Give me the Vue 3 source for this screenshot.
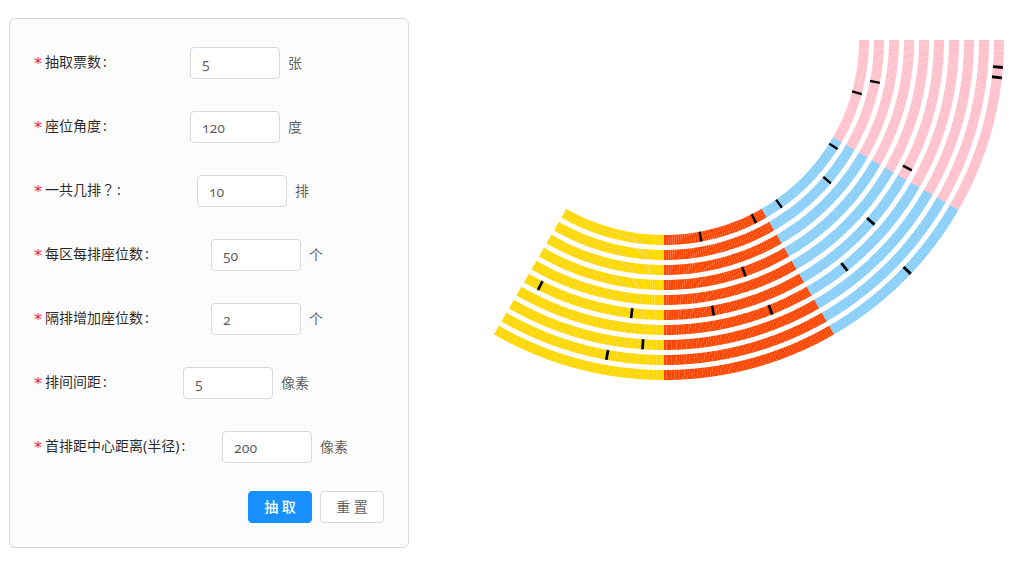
<script setup>
import { computed, reactive, ref } from 'vue'

const fields = [
  { key: 'tickets', label: '抽取票数', unit: '张' },
  { key: 'angle', label: '座位角度', unit: '度' },
  { key: 'rows', label: '一共几排', mark: '？', unit: '排' },
  { key: 'seats', label: '每区每排座位数', unit: '个' },
  { key: 'extra', label: '隔排增加座位数', unit: '个' },
  { key: 'gap', label: '排间间距', unit: '像素' },
  { key: 'radius', label: '首排距中心距离(半径)', unit: '像素' },
]
const defaults = { tickets: '5', angle: '120', rows: '10', seats: '50', extra: '2', gap: '5', radius: '200' }
const form = reactive({ ...defaults })

const zoneColors = ['pink', 'lightskyblue', 'orangered', 'gold']
const zoneAngle = 30
const seatDepth = 10

// Drawn seats, written as zone-row-seat
const initialDrawn = [
  '0-0-25', '0-1-19', '0-9-10', '0-9-14', '0-5-55',
  '1-0-3', '1-1-18', '1-0-41', '1-5-22', '1-6-44', '1-9-30',
  '2-0-5', '2-0-32', '2-3-20', '2-5-39', '2-6-17',
  '3-5-53', '3-5-13', '3-7-8', '3-8-22',
]
const drawn = ref(new Set(initialDrawn))

function point(radius, degrees) {
  const a = (degrees * Math.PI) / 180
  return `${(radius * Math.cos(a)).toFixed(4)} ${(radius * Math.sin(a)).toFixed(4)}`
}

function arc(radius, start, end) {
  return `M${point(radius, start)}A${radius} ${radius} 0 0 1 ${point(radius, end)}`
}

const seats = []
zoneColors.forEach((color, zone) => {
  for (let row = 0; row < 10; row++) {
    const count = 50 + row * 2
    const radius = 200 + row * 15
    const step = zoneAngle / count
    // A drawn seat overlaps its neighbours a little so that it stands out
    const edge = step * 0.05
    for (let i = 0; i < count; i++) {
      const start = zone * zoneAngle + i * step
      seats.push({
        id: `${zone}-${row}-${i}`,
        color,
        d: arc(radius, start, start + step),
        mark: arc(radius, start - edge, start + step + edge),
      })
    }
  }
})
const drawnSeats = computed(() => seats.filter((s) => drawn.value.has(s.id)))

function draw() {
  const pool = seats.filter((s) => !drawn.value.has(s.id))
  const next = new Set(drawn.value)
  for (let i = 0; i < Number(form.tickets) && pool.length; i++) {
    const [seat] = pool.splice(Math.floor(Math.random() * pool.length), 1)
    next.add(seat.id)
  }
  drawn.value = next
}

function reset() {
  Object.assign(form, defaults)
  drawn.value = new Set()
}
</script>

<template>
  <main class="page">
    <form class="card" @submit.prevent="draw">
      <div v-for="f in fields" :key="f.key" class="item">
        <label class="label" :for="f.key"><span class="star">*</span>{{ f.label }}<span v-if="f.mark" class="mark">{{ f.mark }}</span><span class="colon">:</span></label>
        <div class="control">
          <input :id="f.key" v-model="form[f.key]" class="input" type="text" />
          <span class="unit">{{ f.unit }}</span>
        </div>
      </div>
      <div class="actions">
        <button class="button primary" type="submit">抽 取</button>
        <button class="button" type="button" @click="reset">重 置</button>
      </div>
    </form>
    <svg class="seats" viewBox="-180 0 520 340" role="img" aria-label="座位">
      <g fill="none" :stroke-width="seatDepth">
        <path v-for="s in seats" :key="s.id" :d="s.d" :stroke="s.color" />
        <path v-for="s in drawnSeats" :key="s.id" :d="s.mark" stroke="black" />
      </g>
    </svg>
  </main>
</template>

<style>
body {
  background: #fff;
}
</style>

<style scoped>
.page {
  display: flex;
  align-items: flex-start;
  padding: 18px 9px;
  font-family: "Noto Sans", "Noto Sans CJK SC", sans-serif;
  font-size: 14px;
  color: rgba(0, 0, 0, 0.65);
}
.card {
  box-sizing: border-box;
  flex: 0 0 400px;
  padding: 24px;
  background: #fcfcfc;
  border: 1px solid #d9d9d9;
  border-radius: 6px;
}
.item {
  display: flex;
  height: 40px;
  margin-bottom: 24px;
}
.label {
  flex: 1 1 auto;
  line-height: 38px;
  white-space: nowrap;
  color: rgba(0, 0, 0, 0.85);
}
.star {
  display: inline-block;
  width: 11px;
  font-family: "DejaVu Sans", sans-serif;
  font-size: 16px;
  line-height: 16px;
  vertical-align: -2px;
  color: #f5222d;
}
.mark {
  font-family: "Noto Sans CJK TC", sans-serif;
  line-height: 14px;
}
.colon {
  margin: 0 8px 0 2px;
}
.control {
  display: flex;
  flex: 1 1 auto;
  align-items: center;
  gap: 8px;
  height: 40px;
  padding-right: 7px;
}
.input {
  box-sizing: border-box;
  width: 90px;
  height: 32px;
  padding: 4px 11px;
  font: inherit;
  font-variant-numeric: oldstyle-nums;
  color: inherit;
  background: #fff;
  border: 1px solid #d9d9d9;
  border-radius: 4px;
}
.unit {
  line-height: 38px;
}
.actions {
  display: flex;
  justify-content: flex-end;
  gap: 8px;
}
.button {
  box-sizing: border-box;
  min-width: 64px;
  height: 32px;
  padding: 0 15px;
  font: inherit;
  line-height: 30px;
  color: inherit;
  background: #fff;
  border: 1px solid #d9d9d9;
  border-radius: 4px;
  cursor: pointer;
}
.primary {
  font-weight: 500;
  color: #fff;
  background: #1890ff;
  border-color: #1890ff;
}
.seats {
  flex: 1 1 0;
  min-width: 0;
  margin: 22px 0 0 75px;
}
</style>
